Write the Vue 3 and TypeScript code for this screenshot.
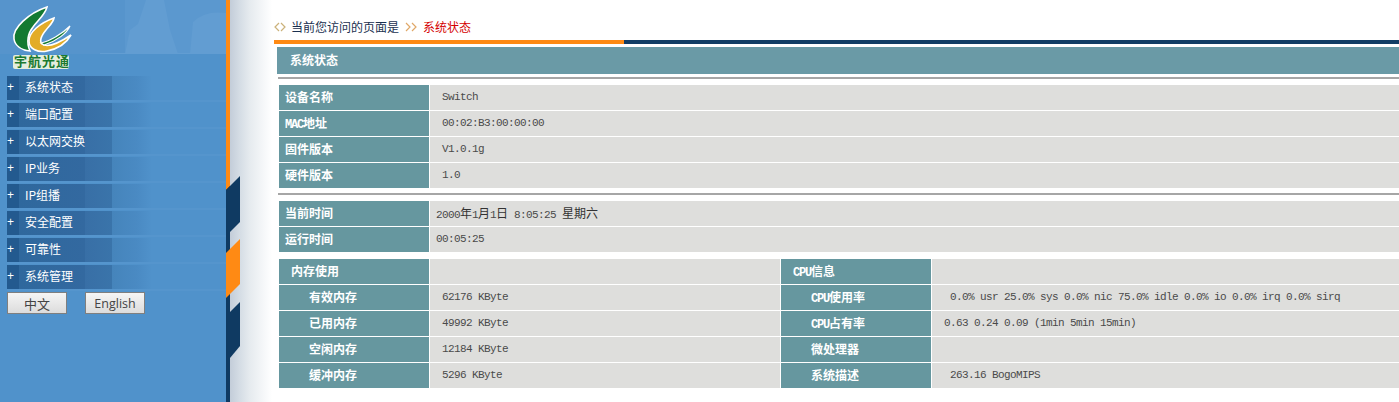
<script setup lang="ts">
const menu: string[] = ['系统状态', '端口配置', '以太网交换', 'IP业务', 'IP组播', '安全配置', '可靠性', '系统管理']
const info = [
  { k: '设备名称', v: 'Switch' },
  { k: 'MAC', k2: '地址', v: '00:02:B3:00:00:00' },
  { k: '固件版本', v: 'V1.0.1g' },
  { k: '硬件版本', v: '1.0' },
]
const rows = [
  { a: '有效内存', b: '62176 KByte', c: 'CPU', c2: '使用率', d: '0.0% usr 25.0% sys 0.0% nic 75.0% idle 0.0% io 0.0% irq 0.0% sirq', far: true },
  { a: '已用内存', b: '49992 KByte', c: 'CPU', c2: '占有率', d: '0.63 0.24 0.09 (1min 5min 15min)', far: false },
  { a: '空闲内存', b: '12184 KByte', c: '', c2: '微处理器', d: '', far: true },
  { a: '缓冲内存', b: '5296 KByte', c: '', c2: '系统描述', d: '263.16 BogoMIPS', far: true },
]
</script>

<template>
  <div class="page">
    <aside class="side">
      <svg class="banner" width="226" height="76" viewBox="0 0 226 76">
        <rect width="226" height="54" fill="#5694cc" />
        <rect x="125" width="101" height="54" fill="#5b98cf" />
        <path d="M125 54 L130 30 L138 24 L146 0 L164 0 L170 30 L178 54 Z" fill="#629dd2" />
        <path d="M190 54 L193 22 Q205 10 226 13 L226 54 Z" fill="#629dd2" />
        <rect y="53" x="100" width="126" height="1" fill="#629dd2" />
        <path d="M47 7 C29 13 12 28 14 39 C15 46 22 50 30 51 C26 42 28 33 33 27 C38 20 45 15 47 7 Z" fill="#137a32" stroke="#fff" stroke-width="1.6" />
        <path d="M54 18 C40 23 29 32 29 41 C29 49 38 53 47 51 C57 49 66 44 71 35 C62 41 50 47 44 45 C38 43 41 36 46 30 C49 26 53 23 54 18 Z" fill="#e3ac28" stroke="#fff" stroke-width="1.6" />
        <path d="M41 43 C50 41 62 34 70 26 C67 33 57 41 44 45 Z" fill="#137a32" stroke="#fff" stroke-width="1.2" />
        <rect x="13" y="55" width="56" height="14" rx="2" fill="#e4eede" />
        <text x="14" y="66" class="logo-text">宇航光通</text>
      </svg>
      <ul class="menu">
        <li v-for="m in menu" :key="m" class="item"><span class="plus">+</span><span class="name">{{ m }}</span></li>
      </ul>
      <div class="langs">
        <button class="btn">中文</button>
        <button class="btn en">English</button>
      </div>
    </aside>

    <div class="gutter">
      <svg class="strip" width="14" height="402" viewBox="0 0 14 402">
        <rect width="4" height="402" fill="#0f3a62" />
        <path d="M0 0 H4 V186 L0 190 Z" fill="#ff8a14" />
        <path d="M0 190 L14 176 V222 L0 236 Z" fill="#0f3a62" />
        <path d="M0 253 L14 239 V284 L0 298 Z" fill="#ff8a14" />
        <path d="M4 358 L14 346 V302 L4 312 Z" fill="#0f3a62" />
      </svg>
    </div>

    <main class="main">
      <div class="crumb">
        <svg width="12" height="10" viewBox="0 0 12 10" class="ico1"><path d="M5 1 L1 5 L5 9 M7 1 L11 5 L7 9" fill="none" stroke="#cbb27a" stroke-width="1.2" /></svg>
        <span class="here">当前您访问的页面是</span>
        <svg width="13" height="10" viewBox="0 0 13 10" class="ico2"><path d="M1 1 L5 5 L1 9 M7 1 L11 5 L7 9" fill="none" stroke="#e0a868" stroke-width="1.2" /></svg>
        <span class="now">系统状态</span>
      </div>
      <div class="bar"><div class="bar-orange"></div></div>
      <h1 class="title">系统状态</h1>
      <div class="rule first"></div>

      <div class="grid two">
        <template v-for="r in info" :key="r.k">
          <div class="lab p6"><span v-if="r.k2" class="lat">{{ r.k }}</span>{{ r.k2 || r.k }}</div>
          <div class="val p12">{{ r.v }}</div>
        </template>
      </div>

      <div class="rule second"></div>

      <div class="grid two">
        <div class="lab p6">当前时间</div>
        <div class="val p6 cn"><span class="m">2000</span>年<span class="m">1</span>月<span class="m">1</span>日<span class="m"> 8:05:25 </span>星期六</div>
        <div class="lab p6">运行时间</div>
        <div class="val p6">00:05:25</div>
      </div>

      <div class="grid four">
        <div class="lab p12">内存使用</div>
        <div class="val"></div>
        <div class="lab p12"><span class="lat">CPU</span>信息</div>
        <div class="val"></div>
        <template v-for="r in rows" :key="r.a">
          <div class="lab p30">{{ r.a }}</div>
          <div class="val p12">{{ r.b }}</div>
          <div class="lab p30"><span v-if="r.c" class="lat">{{ r.c }}</span>{{ r.c2 }}</div>
          <div class="val" :class="r.far ? 'p18' : 'p12'">{{ r.d }}</div>
        </template>
      </div>
    </main>
  </div>
</template>

<style>
html, body { margin: 0; background: #fff; }
</style>

<style scoped>
.page {
  display: flex;
  width: 1399px;
  height: 402px;
  overflow: hidden;
  font-family: "Liberation Mono", "Noto Sans CJK SC", monospace;
  font-size: 12px;
}
.side { width: 226px; flex: none; background: #5092cb; }
.banner { display: block; }
.logo-text {
  font-family: "Noto Sans CJK SC", sans-serif;
  font-size: 13px;
  font-weight: 700;
  letter-spacing: 1px;
  fill: #1a7a30;
}
.menu { list-style: none; margin: 0; padding: 0 0 0 7px; display: flex; flex-direction: column; gap: 3px; }
.item {
  height: 24px;
  box-sizing: border-box;
  padding-bottom: 3px;
  display: flex;
  align-items: center;
  color: #fff;
  background: linear-gradient(90deg, #235a8f 0, #235a8f 12px, #2f689d 12px, #3369a0 78px, #386fa6 78px, #3a74aa 105px, #4584bb 105px, #4a8ac3 130px, #5092cb 145px);
  box-shadow: 0 2px 0 #5595cd;
}
.plus { width: 18px; font: 12px "Liberation Sans", sans-serif; }
.name { font-family: "Noto Sans CJK SC", sans-serif; font-size: 12px; }
.langs { display: flex; gap: 18px; padding: 3px 0 0 7px; }
.btn {
  width: 60px;
  height: 22px;
  padding: 0;
  border: 1px solid #7f7f7f;
  background: linear-gradient(#f5f5f5, #dcdcdc);
  color: #444;
  font: 13px "Noto Sans CJK SC", sans-serif;
}
.btn.en { font: 12.5px "Open Sans", sans-serif; }

.gutter {
  width: 48px;
  flex: none;
  background: linear-gradient(90deg, #c3cdd9 0, #c3cdd9 4px, #d5dde5 14px, #e6ebef 24px, #fff 46px);
}
.strip { display: block; }

.main { flex: 1; min-width: 0; }
.crumb { height: 40px; box-sizing: border-box; padding-top: 14px; display: flex; align-items: center; color: #1a3050; font-family: "Noto Sans CJK SC", sans-serif; line-height: 16px; }
.ico1 { margin-right: 5px; }
.ico2 { margin: 0 5px 0 6px; }
.now { color: #d40000; }
.bar { height: 4px; background: #123d65; }
.bar-orange { width: 350px; height: 4px; background: #ff8a14; }
.title {
  margin: 3px 0 0 3px;
  height: 27px;
  padding-left: 13px;
  background: #6a9aa6;
  color: #fff;
  font: 700 12px/25px "Noto Sans CJK SC", sans-serif;
}
.rule { height: 2px; margin-left: 4px; background: #a6a6a6; }
.rule.first { margin-top: 3px; margin-bottom: 6px; }
.rule.second { margin-top: 5px; margin-bottom: 6px; }
.grid { display: grid; gap: 1px; margin-left: 5px; grid-auto-rows: 25px; }
.two { grid-template-columns: 150px 1fr; }
.four { grid-template-columns: 150px 350px 150px 1fr; margin-top: 7px; }
.lab {
  background: #66979f;
  color: #fff;
  font: 700 12px/23px "Noto Sans CJK SC", sans-serif;
  white-space: nowrap;
}
.lat { font: 700 12px "Liberation Mono", monospace; letter-spacing: -1.2px; }
.val {
  background: #dededc;
  color: #4a4a4a;
  font-size: 11px;
  letter-spacing: -0.6px;
  line-height: 25px;
  white-space: pre;
}
.cn { font-family: "Noto Sans CJK SC", sans-serif; font-size: 12px; line-height: 23px; letter-spacing: 0; color: #333; }
.m { font: 11px "Liberation Mono", monospace; letter-spacing: -0.6px; color: #4a4a4a; }
.p6 { padding-left: 6px; }
.p12 { padding-left: 12px; }
.p18 { padding-left: 18px; }
.p30 { padding-left: 30px; }
</style>
